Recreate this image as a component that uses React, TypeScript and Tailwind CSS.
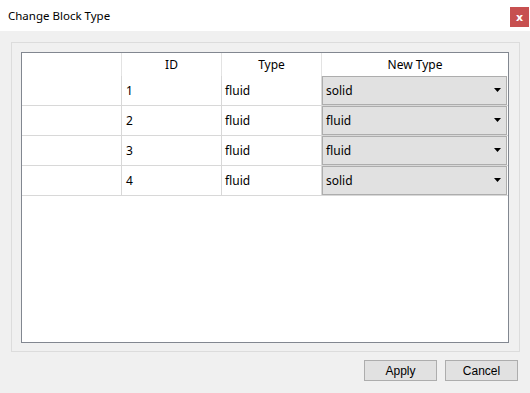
import React from "react";

const rows = [
  { id: "1", type: "fluid", next: "solid" },
  { id: "2", type: "fluid", next: "fluid" },
  { id: "3", type: "fluid", next: "fluid" },
  { id: "4", type: "fluid", next: "solid" },
];

function Arrow() {
  return (
    <svg width="8" height="5" viewBox="0 0 8 5" className="block">
      <path d="M0 0 H7 L3.5 4 Z" fill="#000" />
    </svg>
  );
}

export default function App() {
  return (
    <div className="w-[530px] h-[393px] bg-[#f0f0f0] flex flex-col font-['Noto_Sans',sans-serif] text-[12px] text-black overflow-hidden">
      <div className="h-[31px] bg-white flex justify-between shrink-0">
        <div className="pl-[8px] flex items-center leading-none text-[11.5px]">Change Block Type</div>
        <div className="mt-[7px] mr-[1px] w-[19px] h-[20px] bg-[#c75050] flex items-center justify-center text-white font-bold text-[11px] leading-none font-['DejaVu_Sans',sans-serif]">
          x
        </div>
      </div>
      <div className="pl-[11px] pt-[11px]">
        <div className="w-[509px] h-[310px] border border-[#dcdcdc] pt-[9px] pl-[9px]">
          <div className="w-[488px] h-[291px] border border-[#828790] bg-white">
            <div className="flex h-[23px]">
              <div className="w-[100px] border-r border-[#e3e3e3]" />
              <div className="w-[100px] border-r border-[#e3e3e3] flex items-center justify-center">ID</div>
              <div className="w-[100px] border-r border-[#e3e3e3] flex items-center justify-center">Type</div>
              <div className="flex-1 flex items-center justify-center">New Type</div>
            </div>
            {rows.map((r) => (
              <div key={r.id} className="flex h-[30px] border-b border-[#d8d8d8]">
                <div className="w-[100px] border-r border-[#d8d8d8]" />
                <div className="w-[100px] border-r border-[#d8d8d8] flex items-center pl-[4px]">{r.id}</div>
                <div className="w-[100px] border-r border-[#d8d8d8] flex items-center pl-[3px]">{r.type}</div>
                <div className="flex-1 pr-[1px]">
                  <div className="h-full border border-[#adadad] bg-[#e1e1e1] flex items-center justify-between pl-[3px] pr-[4px]">
                    <span>{r.next}</span>
                    <Arrow />
                  </div>
                </div>
              </div>
            ))}
          </div>
        </div>
      </div>
      <div className="flex justify-end gap-[8px] pr-[12px] mt-[8px] font-['Liberation_Sans',sans-serif]">
        <button className="w-[73px] h-[21px] border border-[#adadad] bg-[#e1e1e1] flex items-center justify-center text-[12px] leading-none">
          Apply
        </button>
        <button className="w-[73px] h-[21px] border border-[#adadad] bg-[#e1e1e1] flex items-center justify-center text-[12px] leading-none">
          Cancel
        </button>
      </div>
    </div>
  );
}
